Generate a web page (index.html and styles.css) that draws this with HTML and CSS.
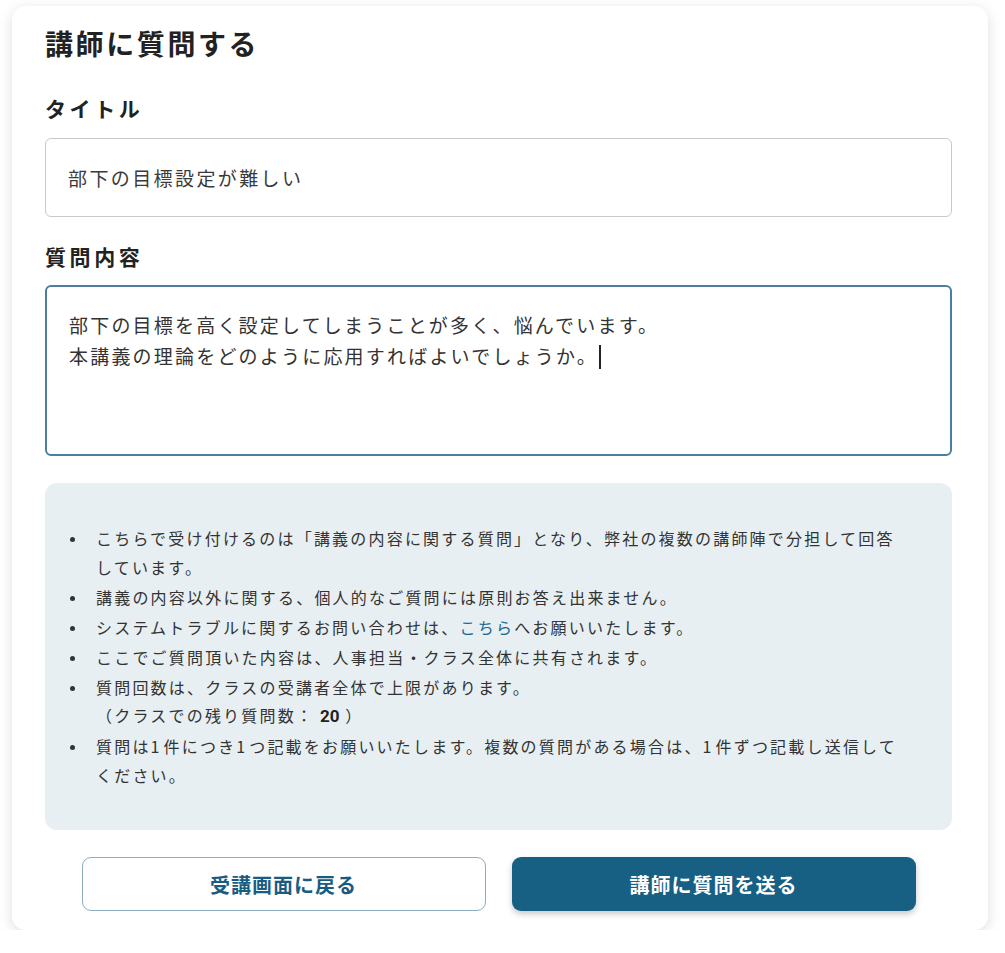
FILE: index.html
```html
<!DOCTYPE html>
<html lang="ja">
<head>
<meta charset="utf-8">
<title>講師に質問する</title>
<link rel="stylesheet" href="styles.css">
</head>
<body>
<main class="card">
  <h1 class="title">講師に質問する</h1>
  <label class="label label-first">タイトル</label>
  <div class="input">部下の目標設定が難しい</div>
  <label class="label">質問内容</label>
  <div class="textarea">部下の目標を高く設定してしまうことが多く、悩んでいます。<br>本講義の理論をどのように応用すればよいでしょうか。<span class="caret"></span></div>
  <section class="info">
    <ul class="notes">
      <li><span class="txt">こちらで受け付けるのは「講義の内容に関する質問」となり、弊社の複数の講師陣で分担して回答<br>しています。</span></li>
      <li><span class="txt">講義の内容以外に関する、個人的なご質問には原則お答え出来ません。</span></li>
      <li><span class="txt">システムトラブルに関するお問い合わせは、<a class="link" href="#">こちら</a>へお願いいたします。</span></li>
      <li><span class="txt">ここでご質問頂いた内容は、人事担当・クラス全体に共有されます。</span></li>
      <li><span class="txt">質問回数は、クラスの受講者全体で上限があります。<br>（クラスでの残り質問数： <b class="num">20</b> ）</span></li>
      <li><span class="txt">質問は<span class="dg">1</span>件につき<span class="dg">1</span>つ記載をお願いいたします。複数の質問がある場合は、<span class="dg">1</span>件ずつ記載し送信して<br>ください。</span></li>
    </ul>
  </section>
  <div class="actions">
    <button class="btn btn-outline">受講画面に戻る</button>
    <button class="btn btn-primary">講師に質問を送る</button>
  </div>
</main>
</body>
</html>
```

FILE: styles.css
```css
* { box-sizing: border-box; }
html, body { margin: 0; padding: 0; background: #ffffff; }
body {
  font-family: "Noto Sans CJK JP", "Noto Sans", sans-serif;
  color: #222;
}
.card {
  width: 976px;
  margin: 6px 0 0 12px;
  padding: 17px 36px 19px 33px;
  background: #fff;
  border-radius: 14px;
  box-shadow: 0 3px 14px rgba(0, 0, 0, 0.13);
  display: flex;
  flex-direction: column;
}
.title {
  margin: 0;
  font-size: 28px;
  line-height: 40px;
  font-weight: 700;
  letter-spacing: 2.6px;
  color: #222;
}
.label {
  display: block;
  margin: 24px 0 14px;
  font-size: 21px;
  line-height: 30px;
  font-weight: 700;
  letter-spacing: 3.6px;
  color: #222;
}
.label-first { margin-top: 30px; margin-bottom: 15px; }
.input {
  height: 79px;
  border: 1.5px solid #c9c9c9;
  border-radius: 6px;
  padding: 0 22px;
  display: flex;
  align-items: center;
  font-size: 19px;
  letter-spacing: 2.4px;
  color: #3a3a3a;
}
.textarea {
  height: 171px;
  border: 2px solid #4c7f9e;
  border-radius: 6px;
  padding: 22px 22px;
  font-size: 19px;
  line-height: 31px;
  letter-spacing: 2.2px;
  color: #333;
}
.caret {
  display: inline-block;
  width: 2px;
  height: 24px;
  background: #222;
  vertical-align: -5px;
  margin-left: 1px;
}
.info {
  margin-top: 27px;
  background: #e7eff2;
  border-radius: 12px;
  padding: 41px 20px 41px 0;
}
.notes {
  list-style: none;
  margin: 0;
  padding: 0 0 0 25px;
  font-size: 16px;
  line-height: 28.5px;
  letter-spacing: 2.2px;
  color: #333;
}
.notes li {
  display: grid;
  grid-template-columns: 26px 1fr;
  margin-bottom: 1.5px;
}
.notes li:last-child { margin-bottom: 0; }
.notes li::before {
  content: "";
  width: 5px;
  height: 5px;
  border-radius: 50%;
  background: #333;
  margin-top: 13px;
}
.dg { letter-spacing: 4px; }
.link { color: #1d6791; text-decoration: none; }
.num {
  font-family: "Roboto", "Liberation Sans", sans-serif;
  font-weight: 700;
  letter-spacing: 0;
  font-size: 17px;
  color: #222;
}
.actions {
  margin-top: 27px;
  display: flex;
  justify-content: center;
  gap: 26px;
}
.btn {
  width: 404px;
  height: 54px;
  border-radius: 9px;
  font-family: "Noto Sans CJK JP", "Noto Sans", sans-serif;
  font-size: 20px;
  font-weight: 700;
  letter-spacing: 1px;
  cursor: pointer;
}
.btn-outline {
  background: #fff;
  border: 1.5px solid #8cadc1;
  color: #1a5c7f;
}
.btn-primary {
  background: #175f83;
  border: none;
  color: #fff;
  box-shadow: 0 3px 6px rgba(0, 0, 0, 0.22);
}
```
